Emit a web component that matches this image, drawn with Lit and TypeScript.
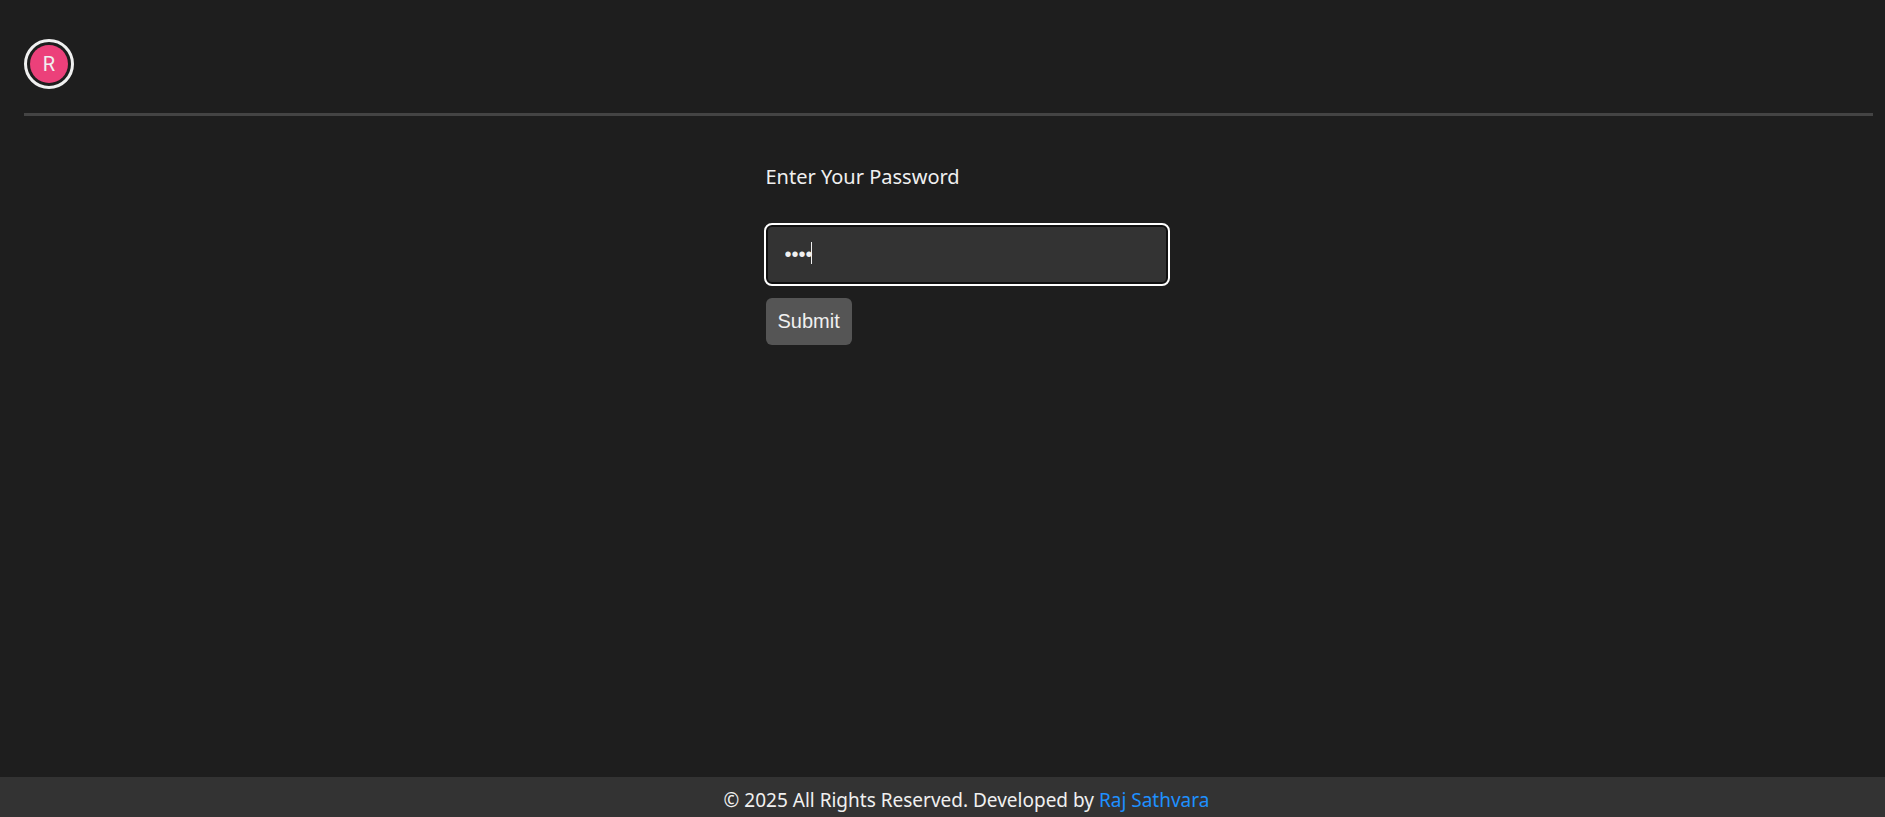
import { LitElement, html, css } from "lit";
import { customElement, state } from "lit/decorators.js";

@customElement("app-root")
export class AppRoot extends LitElement {
  static styles = css`
    :host {
      display: flex;
      flex-direction: column;
      min-height: 100vh;
      background: #1e1e1e;
      color: #f0f0f0;
      font-family: "Segoe UI", "Noto Sans", sans-serif;
    }
    * {
      box-sizing: border-box;
    }
    header {
      display: flex;
      margin: 0 12px 0 24px;
      padding: 39px 0 24px;
      border-bottom: 3px solid #444;
    }
    .avatar {
      width: 50px;
      height: 50px;
      padding: 3px;
      border: 3px solid #f0f0f0;
      border-radius: 50%;
    }
    .initial {
      display: grid;
      place-items: center;
      height: 100%;
      border-radius: 50%;
      background: #ec407a;
      font: 20px/24px Roboto, sans-serif;
    }
    main {
      flex: 1;
      padding: 46px 12px 24px 60px;
    }
    form {
      display: flex;
      flex-direction: column;
      align-items: flex-start;
      width: 402px;
      max-width: 100%;
      margin: 0 auto;
    }
    label {
      font-size: 20px;
      line-height: 30px;
    }
    .field {
      position: relative;
      width: 100%;
      margin: 33px 0 14px;
    }
    input {
      display: block;
      width: 100%;
      height: 59px;
      padding: 0 17px;
      border: 2px solid #101010;
      border-radius: 6px;
      outline: 2px solid #fff;
      background: #333;
      color: #f0f0f0;
      caret-color: transparent;
      font: 20px "Liberation Sans", Arial, sans-serif;
    }
    .caret {
      position: absolute;
      left: 45px;
      top: 17px;
      width: 1px;
      height: 22px;
      background: #f0f0f0;
    }
    button {
      padding: 12px;
      border: 0;
      border-radius: 6px;
      background: #555;
      color: #f0f0f0;
      font: 20px/23px "Liberation Sans", Arial, sans-serif;
      cursor: pointer;
    }
    footer {
      padding: 8px 12px 2px 60px;
      background: #333;
      text-align: center;
      font-size: 19px;
      line-height: 30px;
    }
    a {
      color: #1e90ff;
      text-decoration: none;
    }
  `;

  @state() private password = "1234";

  private onInput(e: Event) {
    this.password = (e.target as HTMLInputElement).value;
  }

  render() {
    return html`
      <header>
        <div class="avatar"><div class="initial">R</div></div>
      </header>
      <main>
        <form @submit=${(e: Event) => e.preventDefault()}>
          <label for="password">Enter Your Password</label>
          <div class="field">
            <input id="password" type="password" .value=${this.password} @input=${this.onInput} />
            <span class="caret"></span>
          </div>
          <button type="submit">Submit</button>
        </form>
      </main>
      <footer>
        © 2025 All Rights Reserved. Developed by <a href="#">Raj Sathvara</a>
      </footer>
    `;
  }
}
